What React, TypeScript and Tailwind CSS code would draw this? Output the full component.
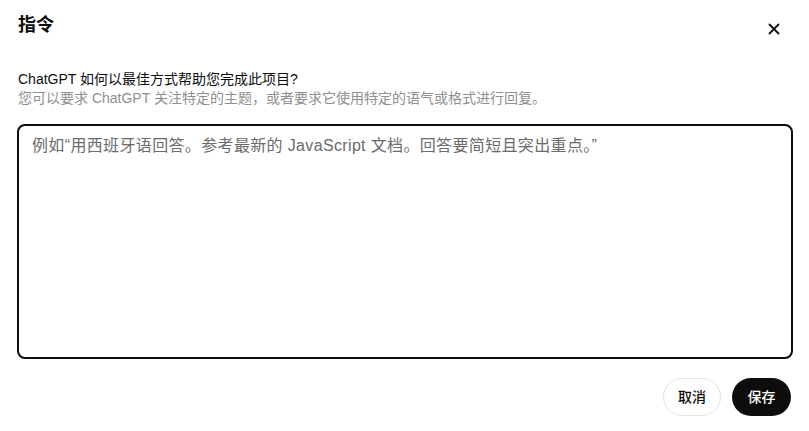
import { useState } from 'react';

const fontStack = "font-['Liberation_Sans','Noto_Sans_CJK_SC',sans-serif]";

const App = () => {
  const [text, setText] = useState('');

  return (
    <div className={`w-[809px] h-[431px] bg-white text-[#0d0d0d] flex flex-col ${fontStack}`}>
      {/* header */}
      <div className="h-[50px] flex items-center justify-between pl-[18px] pr-[25px]">
        <h2 className="text-[18px] leading-[24px] font-bold">指令</h2>
        <button className="mt-2 w-5 h-5 flex items-center justify-center text-[#0d0d0d]">
          <svg width="18" height="18" viewBox="0 0 24 24" fill="none" stroke="currentColor" strokeWidth="2.4" strokeLinecap="round">
            <path d="M6 6L18 18M18 6L6 18" />
          </svg>
        </button>
      </div>

      <div className="px-[17px] pr-[16px] flex flex-col">
        <div className="mt-[19px] pl-[1px]">
          <p className="text-[14px] leading-[20px]">ChatGPT 如何以最佳方式帮助您完成此项目?</p>
          <p className="text-[14px] leading-[18px] text-[#8f8f8f]">
            您可以要求 ChatGPT 关注特定的主题，或者要求它使用特定的语气或格式进行回复。
          </p>
        </div>

        <textarea
          value={text}
          onChange={(e) => setText(e.target.value)}
          placeholder="例如“用西班牙语回答。参考最新的 JavaScript 文档。回答要简短且突出重点。”"
          className="mt-[17px] h-[235px] w-full resize-none rounded-[8px] border-2 border-[#0d0d0d] px-[13px] py-[8px] text-[16px] leading-[24px] tracking-[0.35px] outline-none placeholder:text-[#6b6b6b]"
        />

        <div className="mt-[19px] flex justify-end gap-[11px] pr-[2px]">
          <button className="h-[38px] w-[58px] rounded-full border border-[#e3e3e3] bg-white text-[14px] font-medium">
            取消
          </button>
          <button className="h-[38px] w-[59px] rounded-full bg-[#0d0d0d] text-[14px] font-medium text-white">
            保存
          </button>
        </div>
      </div>
    </div>
  );
};

export default App;
